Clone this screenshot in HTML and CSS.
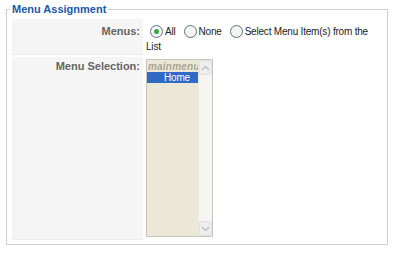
FILE: index.html
```html
<!DOCTYPE html>
<html lang="en">

<head>
  <meta charset="UTF-8" />
  <meta name="viewport" content="width=device-width, initial-scale=1.0" />
  <link rel="stylesheet" href="styles.css">
</head>

<body>
  <fieldset class="adminform">
    <legend>Menu Assignment</legend>
    <div class="row row-menus">
      <div class="key">Menus:</div>
      <div class="value"><span class="radio checked first"></span><span>All</span><span class="radio"></span><span>None</span><span class="radio"></span><span>Select Menu Item(s) from the</span> <span>List</span></div>
    </div>
    <div class="row row-select">
      <div class="key">Menu Selection:</div>
      <div class="value">
        <div class="listbox">
          <div class="items">
            <div class="group">mainmenu</div>
            <div class="item selected">Home</div>
          </div>
          <div class="scroll">
            <div class="btn up"><svg width="9" height="6" viewBox="0 0 9 6"><path d="M1 5 L4.5 1.5 L8 5" fill="none" stroke="#b8bcc4" stroke-width="1.4"/></svg></div>
            <div class="track"></div>
            <div class="btn down"><svg width="9" height="6" viewBox="0 0 9 6"><path d="M1 1 L4.5 4.5 L8 1" fill="none" stroke="#b8bcc4" stroke-width="1.4"/></svg></div>
          </div>
        </div>
      </div>
    </div>
  </fieldset>
</body>

</html>
```

FILE: styles.css
```css
body {
  margin: 0;
  background: #fff;
  font-family: "Liberation Sans", Arial, sans-serif;
  font-size: 11px;
  color: #222;
}

.adminform {
  margin: 1px 8px 0 6px;
  padding: 2px 5px 4px 5px;
  border: 1px solid #cfcfcf;
}

.adminform legend {
  padding: 0 2px;
  margin-left: -2px;
  line-height: 16px;
  font-size: 11px;
  font-weight: bold;
  color: #1b57a8;
}

.row {
  display: grid;
  grid-template-columns: 131px 1fr;
  gap: 2px;
}

.row-menus {
  height: 36px;
  margin-bottom: 2px;
}

.row-select {
  height: 183px;
}

.key {
  background: #f5f5f5;
  border-bottom: 1px solid #ececec;
  text-align: right;
  font-weight: bold;
  color: #666;
  padding: 5px 3px 0 0;
  line-height: 14px;
}

.row-select .key {
  padding-top: 2px;
}

.value {
  padding: 5px 0 0 1px;
  line-height: 15px;
  font-size: 10px;
  letter-spacing: -0.2px;
}

.row-select .value {
  padding: 2px 0 0 1px;
}

.radio {
  display: inline-block;
  vertical-align: -3px;
  box-sizing: border-box;
  width: 13px;
  height: 13px;
  border: 1px solid #5a7184;
  border-radius: 50%;
  background: #f4f4f0;
  margin: 0 2px 0 8px;
  position: relative;
}

.radio.first {
  margin-left: 4px;
}

.radio.checked::after {
  content: "";
  position: absolute;
  left: 3px;
  top: 3px;
  width: 5px;
  height: 5px;
  border-radius: 50%;
  background: #3aa84a;
}

.listbox {
  display: flex;
  width: 65px;
  height: 176px;
  border: 1px solid #c9c6b8;
  background: #ece8d8;
}

.items {
  width: 51px;
  padding-top: 1px;
}

.group {
  font-size: 10px;
  font-weight: bold;
  font-style: italic;
  color: #aaa493;
  line-height: 11px;
  padding-left: 1px;
  letter-spacing: 0.2px;
}

.item {
  line-height: 11px;
  font-size: 10px;
  padding-left: 17px;
}

.item.selected {
  background: #316ac5;
  color: #fff;
}

.scroll {
  width: 14px;
  display: flex;
  flex-direction: column;
  background: #f6f5f1;
  border-left: 1px solid #ebe9e0;
}

.btn {
  height: 13px;
  display: flex;
  align-items: center;
  justify-content: center;
  background: #eeeef0;
  border: 1px solid #dfe0e4;
  border-radius: 2px;
}

.track {
  flex: 1;
}
```
